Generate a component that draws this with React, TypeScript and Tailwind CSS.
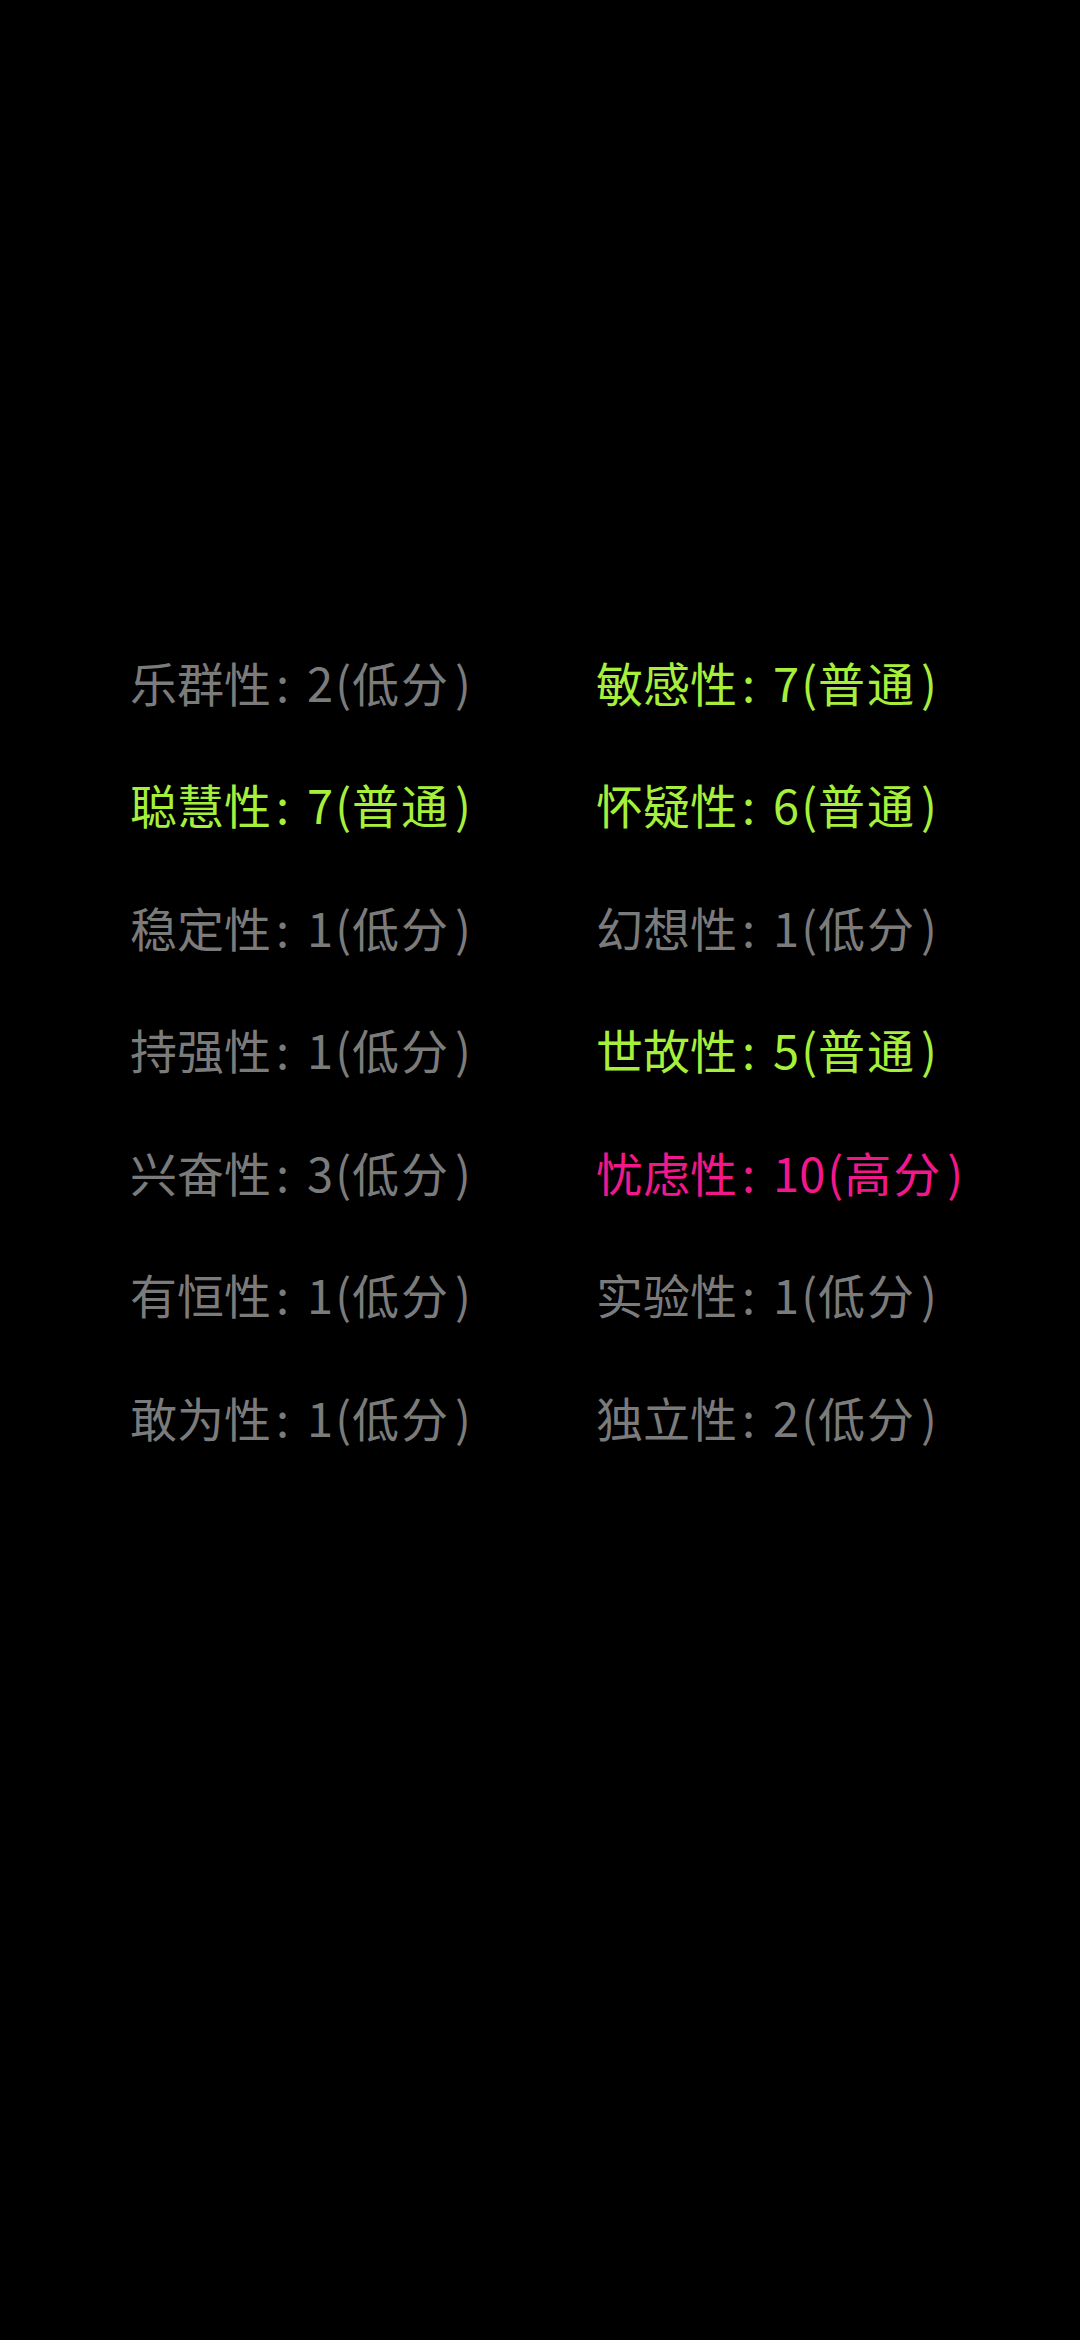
import type React from "react"

type Level = "low" | "mid" | "high"

interface Trait {
  name: string
  score: number
  level: Level
}

const levelText: Record<Level, string> = {
  low: "低分",
  mid: "普通",
  high: "高分",
}

const levelClass: Record<Level, string> = {
  low: "text-[#7b7b7b]",
  mid: "text-[#a6f03c]",
  high: "text-[#f2188b]",
}

// left / right column pairs, row by row
const traits: Trait[] = [
  { name: "乐群性", score: 2, level: "low" },
  { name: "敏感性", score: 7, level: "mid" },
  { name: "聪慧性", score: 7, level: "mid" },
  { name: "怀疑性", score: 6, level: "mid" },
  { name: "稳定性", score: 1, level: "low" },
  { name: "幻想性", score: 1, level: "low" },
  { name: "持强性", score: 1, level: "low" },
  { name: "世故性", score: 5, level: "mid" },
  { name: "兴奋性", score: 3, level: "low" },
  { name: "忧虑性", score: 10, level: "high" },
  { name: "有恒性", score: 1, level: "low" },
  { name: "实验性", score: 1, level: "low" },
  { name: "敢为性", score: 1, level: "low" },
  { name: "独立性", score: 2, level: "low" },
]

const TraitItem: React.FC<{ trait: Trait }> = ({ trait }) => (
  <div className={`h-[122.5px] flex items-center whitespace-nowrap ${levelClass[trait.level]}`}>
    <span>{trait.name}</span>
    <span className="ml-[5px] mr-[18px]">:</span>
    <span>{trait.score}</span>
    <span className="ml-[2px]">(</span>
    <span className="ml-[1px] tracking-[2px]">{levelText[trait.level]}</span>
    <span className="ml-[5px]">)</span>
  </div>
)

export default function App() {
  return (
    <div
      className="w-[1080px] h-[2340px] bg-black pt-[620px] pl-[130px] text-[47px] leading-none"
      style={{ fontFamily: '"Noto Sans CJK SC", "Noto Sans", sans-serif' }}
    >
      <div className="grid grid-cols-[466px_1fr]">
        {traits.map((t) => (
          <TraitItem key={t.name} trait={t} />
        ))}
      </div>
    </div>
  )
}
